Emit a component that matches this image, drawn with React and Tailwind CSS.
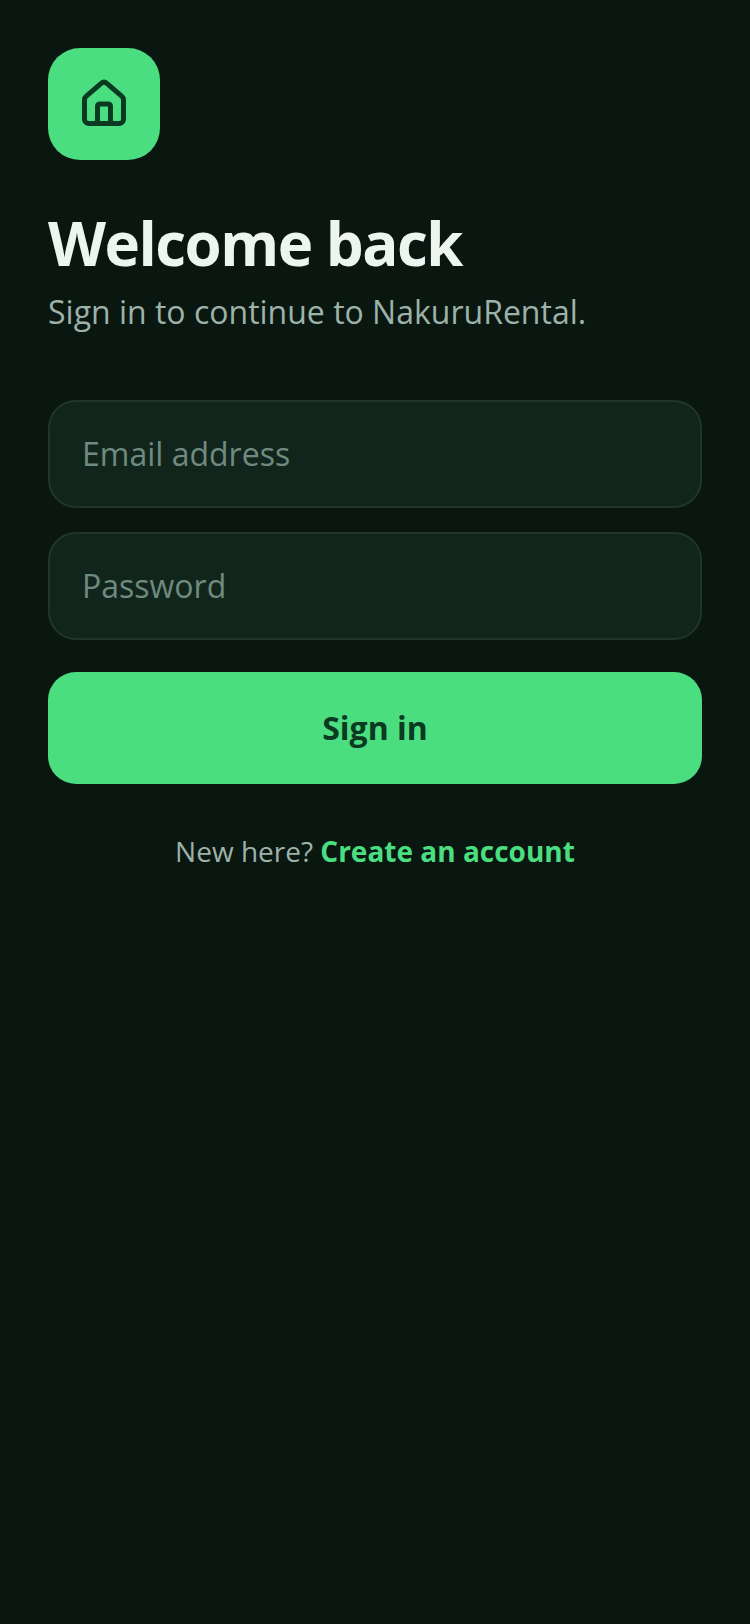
import React from "react";
import { House } from "lucide-react";

const font = "font-['Open_Sans',sans-serif]";

function Field({ placeholder, type }) {
  return (
    <input
      type={type}
      placeholder={placeholder}
      className="block w-full h-[108px] rounded-[28px] border-2 border-[#21352c] bg-[#12251d] px-[32px] pb-[2px] text-[32px] text-[#eef7f2] placeholder:text-[#6f8a7f] outline-none"
    />
  );
}

export default function App() {
  return (
    <div className={`${font} min-h-[1624px] bg-[#0a1711] px-[48px] pt-[48px]`}>
      <div className="flex h-[112px] w-[112px] items-center justify-center rounded-[32px] bg-[#4ade80]">
        <House size={52} strokeWidth={2.3} className="text-[#0a3a21]" />
      </div>
      <h1 className="mt-[47px] text-[60px] leading-[72px] font-bold tracking-[-1.5px] text-[#ecf5f0]">
        Welcome back
      </h1>
      <p className="mt-[11px] text-[32px] leading-[44px] text-[#9db2a8]">
        Sign in to continue to NakuruRental.
      </p>
      <div className="mt-[66px] flex flex-col gap-[24px]">
        <Field placeholder="Email address" type="email" />
        <Field placeholder="Password" type="password" />
      </div>
      <button className="mt-[32px] flex h-[112px] w-full items-center justify-center rounded-[28px] bg-[#4ade80] text-[32px] font-bold text-[#0a3a21]">
        Sign in
      </button>
      <p className="mt-[47px] text-center text-[28px] leading-[40px] text-[#9db2a8]">
        New here? <span className="font-bold text-[#4ade80]">Create an account</span>
      </p>
    </div>
  );
}
